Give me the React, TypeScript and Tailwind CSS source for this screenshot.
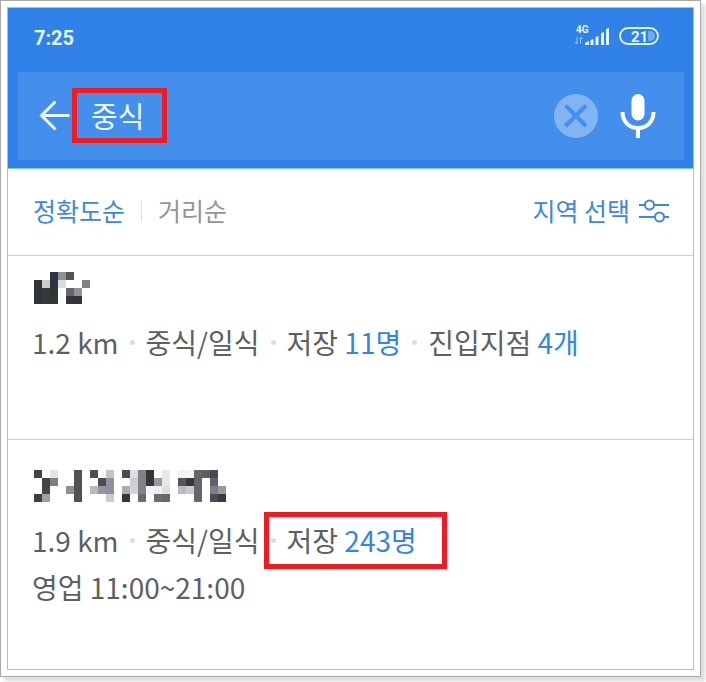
import { useState } from "react"

// One entry per 8px block, null leaves the block empty
const shortMosaic = [
    [null, null, "#2f3340", "#919191", "#4f545a", null, null],
    ["#303436", "#cbcbd6", "#2f3340", "#dcdcdf", null, null, "#7f8184"],
    ["#303436", "#34383a", "#303436", null, "#65666a", "#929296", null],
    ["#303436", "#363a3c", "#34383a", null, "#34343f", "#323338", null],
]

const longMosaic = [
    ["#3f4248", null, "#e4e4e8", null, null, "#505257", null, "#4b4f52", null, "#c4c4cd", null, "#484c50", "#dddfe4", "#808285", "#34373b", null, "#e8e8ec", null, "#f1f2f4", "#f4f4f7", "#636669", "#5b5d5f", "#484953", null],
    [null, "#434449", "#7f7f83", null, null, "#505257", null, null, "#4d4c57", "#908f9d", null, null, "#c9ccd4", "#808285", "#34373b", "#9a9a9d", "#e8e8ec", null, "#555555", "#36373d", "#636669", null, "#5f6070", null],
    [null, "#47474a", null, null, "#8d8f90", "#505257", null, "#b9babd", "#95949f", "#92909d", null, "#adadaf", "#d0d3d8", "#808285", "#f4f4f4", "#eef0f0", "#dcdfe3", null, "#b9bbc2", "#c9cacf", "#636669", null, "#7d7e83", "#999a9f"],
    ["#3d3f42", "#a0a0a4", null, null, null, "#505257", null, null, null, "#cbcad5", null, "#35363b", null, "#6a6b70", null, "#6a6d6d", "#666968", null, null, null, "#636669", null, "#4a4c55", "#3a3c42"],
]

function Mosaic({ rows }: { rows: (string | null)[][] }) {
    return (
        <svg
            className="ml-0.5 block"
            width={rows[0].length * 8}
            height={rows.length * 8}
            shapeRendering="crispEdges"
            aria-hidden="true"
        >
            {rows.map((row, y) =>
                row.map((fill, x) =>
                    fill ? <rect key={`${x}-${y}`} x={x * 8} y={y * 8} width="8" height="8" fill={fill} /> : null
                )
            )}
        </svg>
    )
}

function Dot() {
    return <span className="mx-[11px] size-[5px] shrink-0 rounded-full bg-[#dcdce4]" />
}

function StatusBar() {
    return (
        <div className="flex h-16 items-center justify-between pl-[26px] pr-[33px] pb-2 text-[#e4f6ff]">
            <span className="pt-1 font-[Roboto] text-[20px] font-bold">7:25</span>
            <div className="flex items-center gap-2">
                <svg width="38" height="22" viewBox="0 0 38 22" fill="currentColor" role="img" aria-label="4G">
                    <text x="4" y="8" fontFamily="Roboto, sans-serif" fontSize="10" fontWeight="700">4G</text>
                    <path d="M5 12v7M3 17l2 2M8.500 19v-7M8.500 12l2 2" fill="none" stroke="currentColor" opacity=".6" />
                    <path d="M13 18l4-2v4h-4zM18.500 15l3-1v6h-3zM23.500 12l3-1v9h-3zM29 8l3-1v13h-3zM34 4l3-1v17h-3z" />
                </svg>
                <svg width="42" height="20" viewBox="0 0 42 20" fill="none" role="img" aria-label="21%">
                    <path d="M30 5h2a5 5 0 0 1 0 10h-2z" fill="#70aaf3" />
                    <rect x="2" y="2" width="38" height="16" rx="8" stroke="currentColor" strokeWidth="1.800" />
                    <text x="13" y="15.500" fill="currentColor" fontFamily="Roboto, sans-serif" fontSize="15" fontWeight="700">21</text>
                </svg>
            </div>
        </div>
    )
}

export default function App() {
    const [query, setQuery] = useState("중식")

    return (
        <div className="bg-white pr-[5px] pb-[5px] font-['Noto_Sans_CJK_KR',sans-serif] text-[#5e5f62]">
            <div className="border border-[#a9a9a9] bg-white p-1.5 shadow-[4px_4px_3px_#dedede]">
                <div className="border border-[#bdbdbd]">
                    <header className="border-b border-[#8fbcf3] bg-[#3182e8] pb-2">
                        <StatusBar />
                        <div className="mr-[9px] ml-2.5 flex h-[88px] items-center bg-[#448eec] pl-5 pr-7">
                            <button type="button" aria-label="뒤로" className="shrink-0">
                                <svg width="34" height="32" viewBox="0 0 34 32" fill="none" stroke="#e6f6ff" strokeWidth="3">
                                    <path d="M17.500 1.500L3.500 15.500l14 14M3.500 15.500h28" />
                                </svg>
                            </button>
                            <div className="relative flex-1">
                                <input
                                    type="text"
                                    aria-label="검색어"
                                    value={query}
                                    onChange={(e) => setQuery(e.target.value)}
                                    className="block h-14 w-full min-w-0 bg-transparent pb-0.5 pl-[19px] text-[29px] text-[#edf9ff] outline-none"
                                />
                                <span className="pointer-events-none absolute top-0 left-0 h-[55px] w-[95px] border-5 border-[#ed1c24]" />
                            </div>
                            <button type="button" aria-label="지우기" className="shrink-0">
                                <svg width="44" height="44" viewBox="0 0 44 44">
                                    <circle cx="22" cy="22" r="22" fill="#82b3f3" />
                                    <path d="M11.500 11.500l20.500 20.500M32 11.500L11.500 32" stroke="#448eec" strokeWidth="4" />
                                </svg>
                            </button>
                            <button type="button" aria-label="음성 검색" className="ml-[22px] shrink-0">
                                <svg width="36" height="44" viewBox="0 0 36 44">
                                    <rect x="11.500" y="0" width="13" height="26.500" rx="6.500" fill="#fff" />
                                    <path d="M2.500 18c0 9.500 6.500 16 15.500 16s15.500-6.500 15.500-16M18 34v10" fill="none" stroke="#fff" strokeWidth="4" />
                                </svg>
                            </button>
                        </div>
                    </header>

                    <div className="flex h-[87px] items-center border-b border-[#d2d2d2] pl-[25px] pr-[23px] pb-0.5 text-[25px]">
                        <button type="button" className="text-[#3d87dc]">정확도순</button>
                        <span className="mx-4 h-[22px] w-px bg-[#dedede]" />
                        <button type="button" className="text-[#959595]">거리순</button>
                        <button type="button" className="ml-auto flex items-center gap-2 text-[#3d87dc]">
                            지역 선택
                            <svg width="32" height="26" viewBox="0 0 32 26" fill="none" stroke="currentColor" strokeWidth="2">
                                <path d="M1 7h6M15 7h16M1 19h16M26 19h5" />
                                <circle cx="11.500" cy="7" r="4.500" />
                                <circle cx="21.500" cy="19" r="4.500" />
                            </svg>
                        </button>
                    </div>

                    <main className="text-[28px] leading-[47px] whitespace-nowrap">
                        <article className="border-b border-[#d2d2d2] px-6 pt-4 pb-[73px]">
                            <Mosaic rows={shortMosaic} />
                            <div className="mt-[15px] flex items-center">
                                <span>1.2 km</span>
                                <Dot />
                                <span>중식/일식</span>
                                <Dot />
                                <span>저장 <span className="text-[#3586e2]">11명</span></span>
                                <Dot />
                                <span>진입지점 <span className="text-[#3586e2]">4개</span></span>
                            </div>
                        </article>
                        <article className="px-6 pt-[30px] pb-[58px]">
                            <Mosaic rows={longMosaic} />
                            <div className="mt-[15px] flex items-center">
                                <span>1.9 km</span>
                                <Dot />
                                <span>중식/일식</span>
                                <div className="relative flex items-center">
                                    <Dot />
                                    <span>저장 <span className="text-[#3586e2]">243명</span></span>
                                    <span className="pointer-events-none absolute -inset-y-[5px] -right-[30px] left-1 border-5 border-[#ed1c24]" />
                                </div>
                            </div>
                            <p>영업 11:00~21:00</p>
                        </article>
                    </main>
                </div>
            </div>
        </div>
    )
}
